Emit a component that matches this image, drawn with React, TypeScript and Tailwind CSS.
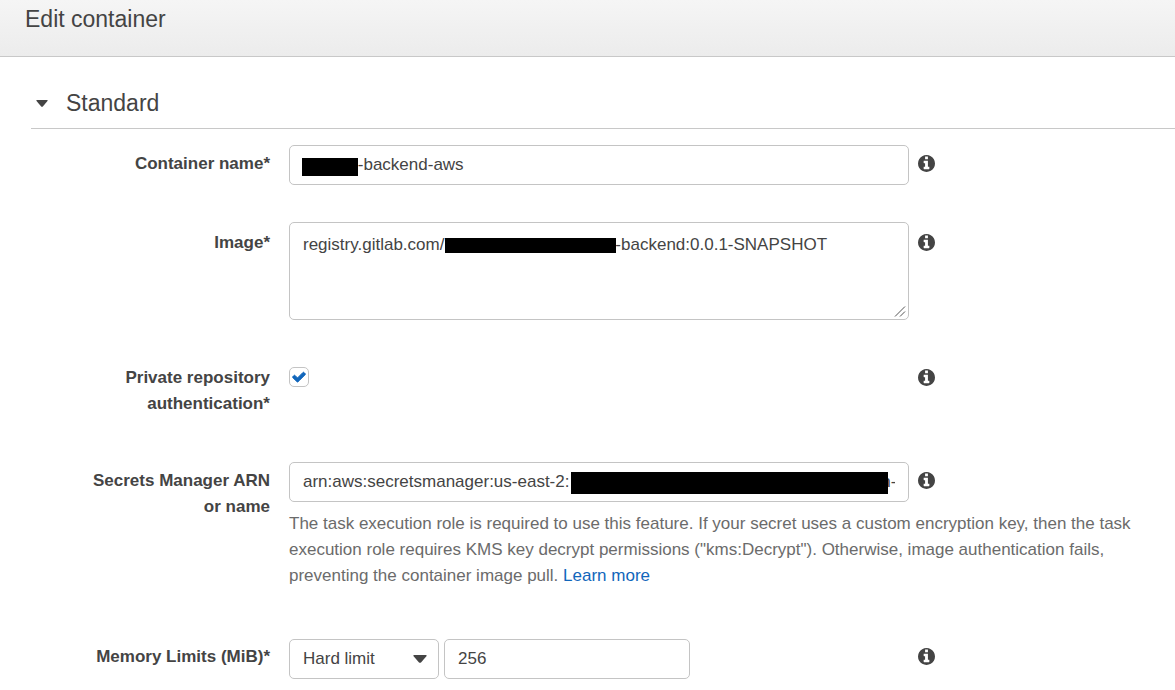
import { useState, type ReactNode } from "react";

const NBSP = "\u00a0";
const EM = "\u2003";
const inputClass =
  "block w-full rounded-[5px] border border-[#c4c4c4] bg-white px-[13px] text-[17px] text-[#444] outline-none focus:border-[#146eb4]";

function Info({ topic }: { topic: string }) {
  return (
    <button type="button" aria-label={`About ${topic}`} className="flex h-[26px] shrink-0 items-start pt-1 text-[#444]">
      <svg viewBox="128 128 1536 1536" fill="currentColor" aria-hidden="true" className="size-[17px]">
        <path d="M1152 1376v-160q0-14-9-23t-23-9h-96v-512q0-14-9-23t-23-9h-320q-14 0-23 9t-9 23v160q0 14 9 23t23 9h96v320h-96q-14 0-23 9t-9 23v160q0 14 9 23t23 9h448q14 0 23-9t9-23zm-128-896v-192q0-14-9-23t-23-9h-192q-14 0-23 9t-9 23v192q0 14 9 23t23 9h192q14 0 23-9t9-23zm640 416q0 209-103 385.5t-279.5 279.5-385.5 103-385.5-103-279.5-279.5-103-385.5 103-385.5 279.5-279.5 385.5-103 385.5 103 279.5 279.5 103 385.5z" />
      </svg>
    </button>
  );
}

function Row({
  id,
  label,
  top = "pt-1.5",
  margin,
  help,
  children,
}: {
  id: string;
  label: string;
  top?: string;
  margin: string;
  help?: ReactNode;
  children: ReactNode;
}) {
  return (
    <div className={`flex gap-[19px] ${margin}`}>
      <label htmlFor={id} className={`w-[270px] shrink-0 pl-20 text-right text-[17px] leading-[26px] font-bold ${top}`}>
        {label}
      </label>
      <div className="min-w-0 flex-1 pr-4">
        <div className="flex gap-[9px]">
          <div className="min-w-0 max-w-[620px] flex-1">{children}</div>
          <div className={top}>
            <Info topic={label} />
          </div>
        </div>
        {help}
      </div>
    </div>
  );
}

function Caret({ className }: { className: string }) {
  return (
    <svg viewBox="0 0 14 8" fill="currentColor" aria-hidden="true" className={className}>
      <path d="M1 0h12q1 0 .6.9L8 7.4q-1 .9-2 0L.4.9Q0 0 1 0z" />
    </svg>
  );
}

export default function App() {
  const [open, setOpen] = useState(true);
  return (
    <div className="min-h-screen overflow-hidden bg-white pb-3 font-['Liberation_Sans',Arial,sans-serif] text-[#444]">
      <header className="h-[57px] border-b border-[#c8c8c8] bg-linear-to-b from-[#f5f5f5] to-[#ececec] px-[25px]">
        <h1 className="text-[23px] leading-[38px]">Edit container</h1>
      </header>
      <form onSubmit={(e) => e.preventDefault()}>
        <h2 className="ml-[31px] border-b border-[#c8c8c8] pt-[26px] pb-[5px]">
          <button
            type="button"
            aria-expanded={open}
            onClick={() => setOpen(!open)}
            className="flex items-center gap-[18px] pl-[5px] text-[23px] leading-10"
          >
            <Caret className="h-[7px] w-3" />
            Standard
          </button>
        </h2>
        {open && (
          <div>
            <Row id="name" label="Container name*" margin="mt-4">
              <div className="relative">
                <input id="name" className={`${inputClass} h-10`} defaultValue={`${EM}${NBSP.repeat(8)}-backend-aws`} />
                <span className="absolute top-[13px] left-[13px] h-[18px] w-14 bg-black" />
              </div>
            </Row>
            <Row id="image" label="Image*" top="pt-2" margin="mt-[37px]">
              <div className="relative">
                <textarea
                  id="image"
                  spellCheck={false}
                  className={`${inputClass} h-[98px] resize-y py-[9px] leading-[26px]`}
                  defaultValue={`registry.gitlab.com/${NBSP.repeat(29)}${EM}${EM}-backend:0.0.1-SNAPSHOT`}
                />
                <span className="absolute top-4 left-[156px] h-[15px] w-[171px] bg-black" />
                <svg
                  viewBox="0 0 13 13"
                  fill="none"
                  stroke="#555"
                  aria-hidden="true"
                  className="pointer-events-none absolute right-0.5 bottom-0.5 size-[13px] bg-white"
                >
                  <path d="M1 11.5L11 1.5M6 11.5L11 6.5" />
                </svg>
              </div>
            </Row>
            <Row id="private" label="Private repository authentication*" margin="mt-[39px]">
              <span className="relative mt-2 block size-5">
                <input
                  id="private"
                  type="checkbox"
                  defaultChecked
                  className="peer block size-5 appearance-none rounded-[5px] border border-[#c4c4c4] bg-white"
                />
                <svg
                  viewBox="46 60 1700 1700"
                  fill="currentColor"
                  stroke="currentColor"
                  strokeWidth="110"
                  aria-hidden="true"
                  className="pointer-events-none absolute top-[3px] left-[3px] hidden size-3.5 text-[#1166bb] peer-checked:block"
                >
                  <path d="M1671 566q0 40-28 68l-724 724-136 136q-28 28-68 28t-68-28l-136-136-362-362q-28-28-28-68t28-68l136-136q28-28 68-28t68 28l294 295 656-657q28-28 68-28t68 28l136 136q28 28 28 68z" />
                </svg>
              </span>
            </Row>
            <Row
              id="secret"
              label="Secrets Manager ARN or name"
              margin="mt-[45px]"
              help={
                <p className="mt-[9px] text-[17px] leading-[26px] text-[#6b6b6b]">
                  The task execution role is required to use this feature. If your secret uses a custom encryption key,
                  then the task execution role requires KMS key decrypt permissions ("kms:Decrypt"). Otherwise, image
                  authentication fails, preventing the container image pull.{" "}
                  <a href="#learn-more" className="text-[#1166bb] hover:underline">
                    Learn more
                  </a>
                </p>
              }
            >
              <div className="relative">
                <input
                  id="secret"
                  className={`${inputClass} h-10`}
                  defaultValue={`arn:aws:secretsmanager:us-east-2:${NBSP.repeat(66)}n-`}
                />
                <span className="absolute top-2.5 left-[282px] h-[22px] w-[317px] bg-black" />
              </div>
            </Row>
            <Row id="limit" label="Memory Limits (MiB)*" top="pt-[5px]" margin="mt-[50px]">
              <div className="flex gap-[5px]">
                <div className="relative w-[150px]">
                  <select id="limit" className={`${inputClass} h-10 appearance-none`} defaultValue="hard">
                    <option value="hard">Hard limit</option>
                    <option value="soft">Soft limit</option>
                  </select>
                  <Caret className="pointer-events-none absolute top-4 right-3 h-2 w-3.5" />
                </div>
                <input aria-label="Memory in MiB" className={`${inputClass} h-10 max-w-[246px]`} defaultValue="256" />
              </div>
            </Row>
          </div>
        )}
      </form>
    </div>
  );
}
